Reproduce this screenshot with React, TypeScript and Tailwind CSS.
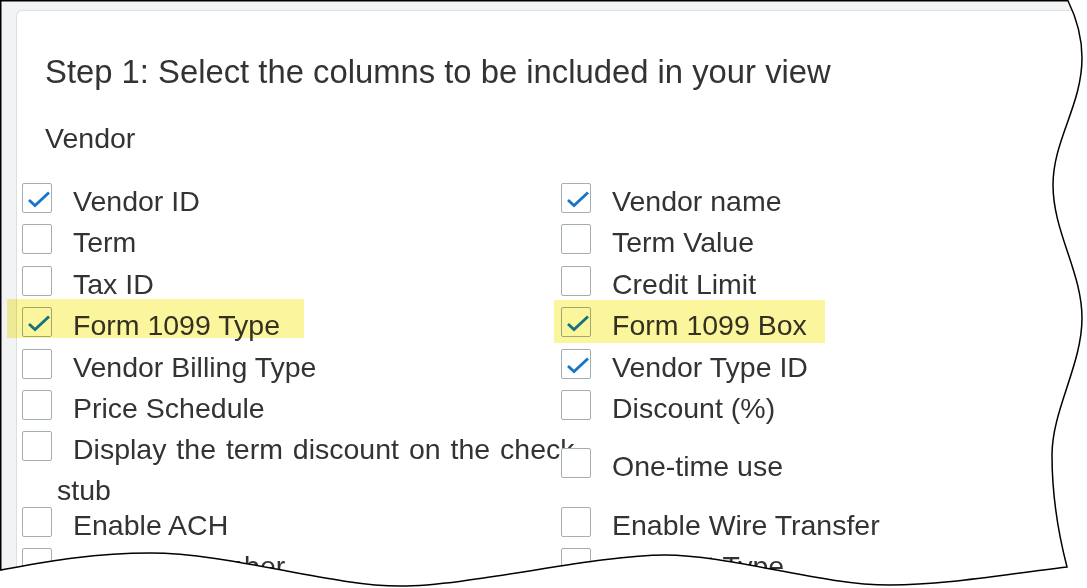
import React from 'react'

type Item = { label: string; checked?: boolean; mark?: 'left' | 'right'; wide?: boolean }

const rows: [Item, Item][] = [
  [{ label: 'Vendor ID', checked: true }, { label: 'Vendor name', checked: true }],
  [{ label: 'Term' }, { label: 'Term Value' }],
  [{ label: 'Tax ID' }, { label: 'Credit Limit' }],
  [
    { label: 'Form 1099 Type', checked: true, mark: 'left' },
    { label: 'Form 1099 Box', checked: true, mark: 'right' }
  ],
  [{ label: 'Vendor Billing Type' }, { label: 'Vendor Type ID', checked: true }],
  [{ label: 'Price Schedule' }, { label: 'Discount (%)' }],
  [{ label: 'Display the term discount on the check stub', wide: true }, { label: 'One-time use' }],
  [{ label: 'Enable ACH' }, { label: 'Enable Wire Transfer' }],
  [{ label: 'Account Number' }, { label: 'Account Type' }]
]

const Box = ({ checked }: { checked?: boolean }) => (
  <span className="relative inline-block w-[30px] h-[30px] align-[-13.4px] mb-[11.4px] mr-[21px] indent-0 border border-[#a3adb2] rounded-[2px] bg-white">
    {checked && (
      <svg className="absolute left-0 top-0" width="28" height="28" viewBox="0 0 28 28">
        <path d="M6 16 L12 21.5 L26 8.5" fill="none" stroke="#1774c8" strokeWidth="2.8" />
      </svg>
    )}
  </span>
)

const Cell = ({ item }: { item: Item }) => (
  <div
    className={`${item.mark ? 'relative' : ''} ${item.wide ? 'w-[590px] [word-spacing:2px]' : 'w-[530px]'} pl-[35px] -indent-[35px]`}
  >
    <Box checked={item.checked} />
    {item.label}
    {item.mark === 'left' && (
      <span className="absolute left-[-15px] top-[-8px] w-[297px] h-[39px] bg-[#fbf59d] mix-blend-multiply" />
    )}
    {item.mark === 'right' && (
      <span className="absolute left-[-7px] top-[-7px] w-[271px] h-[43px] bg-[#fbf59d] mix-blend-multiply" />
    )}
  </div>
)

const TornEdge = () => {
  const edge =
    'M0.75 0.75 L1068 0.75 C1075 15 1082 35 1082 58 C1082 105 1053 140 1053 185 C1053 232 1082 272 1082 318 C1082 365 1052 410 1052 455 C1052 500 1060 540 1067 567 C1000 575 945 585 890 585 C820 585 730 555 665 555 C595 555 470 586 400 586 C330 586 230 553 150 553 C90 553 40 563 0.75 570 Z'
  return (
    <svg className="absolute inset-0" width="1087" height="588" viewBox="0 0 1087 588">
      <path d={`M0 0 H1087 V588 H0 Z ${edge}`} fill="#fff" fillRule="evenodd" />
      <path d={edge} fill="none" stroke="#000" strokeWidth="1.5" />
    </svg>
  )
}

export default function App() {
  return (
    <div className="relative w-[1087px] h-[588px] overflow-hidden bg-[#f1f3f4] font-['Liberation_Sans',Arial,sans-serif] text-[#333333]">
      <div className="ml-[16px] mt-[10px] w-[1200px] h-[700px] bg-white border-l border-t border-[#dcdfe1] rounded-tl-[6px] pt-[40.7px] pl-[5px]">
        <h2 className="ml-[23px] text-[32.8px] leading-[40px] font-normal">
          Step 1: Select the columns to be included in your view
        </h2>
        <div className="ml-[23px] mt-[29.6px] text-[28.5px] leading-[34px]">Vendor</div>
        <div className="mt-[27.7px] grid grid-cols-[539px_539px] items-center text-[28.5px] leading-[34px]">
          {rows.map(([l, r]) => (
            <React.Fragment key={l.label}>
              <Cell item={l} />
              <Cell item={r} />
            </React.Fragment>
          ))}
        </div>
      </div>
      <TornEdge />
    </div>
  )
}
